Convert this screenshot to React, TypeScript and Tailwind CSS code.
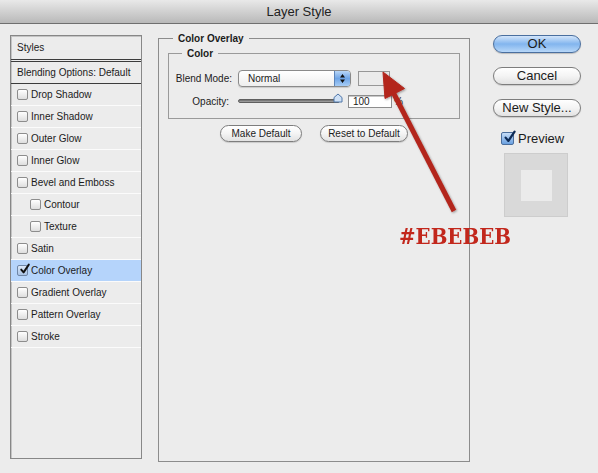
import React from "react";

const effects: { label: string; indent?: boolean; checked?: boolean }[] = [
  { label: "Drop Shadow" },
  { label: "Inner Shadow" },
  { label: "Outer Glow" },
  { label: "Inner Glow" },
  { label: "Bevel and Emboss" },
  { label: "Contour", indent: true },
  { label: "Texture", indent: true },
  { label: "Satin" },
  { label: "Color Overlay", checked: true },
  { label: "Gradient Overlay" },
  { label: "Pattern Overlay" },
  { label: "Stroke" },
];

function Check({ size = 11, blue = false }: { size?: number; blue?: boolean }) {
  return (
    <svg width={size} height={size} viewBox="0 0 11 11" className="absolute left-[1px] -top-[2px] overflow-visible">
      <path
        d="M2.2 5.6 L4.6 8.4 L9.8 0.6"
        fill="none"
        stroke={blue ? "#0d2a55" : "#111"}
        strokeWidth="1.9"
        strokeLinecap="round"
        strokeLinejoin="round"
      />
    </svg>
  );
}

function Checkbox({ checked }: { checked?: boolean }) {
  return (
    <span
      className={
        "relative inline-block w-[11px] h-[11px] rounded-[2px] border shrink-0 " +
        (checked
          ? "border-[#6f86a6] bg-gradient-to-b from-[#dbe8f8] to-[#a9c3e6]"
          : "border-[#8d8d8d] bg-gradient-to-b from-[#ffffff] to-[#dedede]")
      }
    >
      {checked && <Check />}
    </span>
  );
}

function RoundButton({ children, className = "" }: { children: React.ReactNode; className?: string }) {
  return (
    <button
      className={
        "flex items-center justify-center rounded-full border border-[#7d7d7d] bg-gradient-to-b from-[#ffffff] via-[#f4f4f4] to-[#e2e2e2] shadow-[0_1px_1px_rgba(0,0,0,0.15)] " +
        className
      }
    >
      {children}
    </button>
  );
}

export default function App() {
  return (
    <div className="relative w-[598px] h-[473px] overflow-hidden bg-[#ececec] text-[#1b1b1b] font-['Liberation_Sans',Arial,sans-serif]">
      {/* title bar */}
      <div className="h-[24px] flex items-center justify-center border-b border-[#6f6f6f] bg-gradient-to-b from-[#e9e9e9] to-[#b9b9b9] text-[13px] text-[#222]">
        Layer Style
      </div>

      <div className="flex pl-[10px]">
        {/* styles list */}
        <div className="mt-[11px] w-[132px] h-[424px] border border-[#878787] bg-[#ececec] shadow-[inset_1px_1px_0_#c4c4c4] text-[10px]">
          <div className="h-[23px] flex items-center pl-[6px]">Styles</div>
          <div className="h-[3px] border-y border-[#3c3c3c]" />
          <div className="h-[22px] flex items-center pl-[6px] border-b border-[#3c3c3c]">Blending Options: Default</div>
          {effects.map((e) => (
            <div
              key={e.label}
              className={
                "h-[22px] flex items-center border-b border-[#fbfbfb] " +
                (e.indent ? "pl-[19px] " : "pl-[6px] ") +
                (e.checked ? "bg-[#b5d4fb]" : "")
              }
            >
              <Checkbox checked={e.checked} />
              <span className="ml-[3px]">{e.label}</span>
            </div>
          ))}
        </div>

        {/* color overlay */}
        <fieldset className="ml-[16px] mt-[8px] w-[312px] h-[430px] border border-[#8c8c8c] px-[9px]">
          <legend className="ml-[5px] px-[5px] text-[10px] leading-[13px] font-bold">Color Overlay</legend>
          <fieldset className="mt-[2px] border border-[#9a9a9a] pb-[11px]">
            <legend className="ml-[13px] px-[5px] text-[10px] leading-[13px] font-bold">Color</legend>
            <div className="mt-[10px] h-[17px] flex items-center text-[10px]">
              <span className="w-[63px] text-right">Blend Mode:</span>
              <div className="ml-[6px] w-[113px] h-[17px] flex rounded-[4px] border border-[#8a8a8a] bg-gradient-to-b from-[#ffffff] to-[#eeeeee] shadow-[0_1px_1px_rgba(0,0,0,0.15)] overflow-hidden">
                <span className="flex-1 flex items-center pl-[9px]">Normal</span>
                <span className="w-[16px] flex items-center justify-center border-l border-[#5d84b8] bg-gradient-to-b from-[#b9d6f6] via-[#6ea4e6] to-[#a6ccf5]">
                  <svg width="7" height="11" viewBox="0 0 7 11">
                    <path d="M3.5 1 L6 4.5 H1 Z M3.5 10 L6 6.5 H1 Z" fill="#111" />
                  </svg>
                </span>
              </div>
              <div className="ml-[7px] w-[32px] h-[15px] border border-[#979797] bg-[#ebebeb]" />
            </div>
            <div className="mt-[8px] h-[12px] flex items-center text-[10px]">
              <span className="w-[63px] text-right pr-[3px]">Opacity:</span>
              <div className="relative ml-[6px] w-[102px] h-[12px] flex items-center">
                <div className="w-full h-[4px] rounded-full border border-[#5f5f5f] bg-gradient-to-b from-[#6a6a6a] to-[#a8a8a8]" />
                <svg width="10" height="10" viewBox="0 0 10 10" className="absolute -right-[3px] -top-[2px]">
                  <path d="M1 9 V4.5 L5 1 L9 4.5 V9 Z" fill="#cfe1f6" stroke="#4f76a8" strokeWidth="1" />
                </svg>
              </div>
              <div className="ml-[8px] w-[44px] h-[13px] flex items-center pl-[4px] border border-[#8d8d8d] bg-white shadow-[inset_0_1px_0_#c8c8c8]">
                100
              </div>
              <span className="ml-[2px]">%</span>
            </div>
          </fieldset>
          <div className="mt-[6px] flex justify-center gap-[18px] text-[10px]">
            <RoundButton className="w-[82px] h-[17px]">Make Default</RoundButton>
            <RoundButton className="w-[88px] h-[17px]">Reset to Default</RoundButton>
          </div>
        </fieldset>

        {/* buttons */}
        <div className="ml-[23px] mt-[11px] w-[88px] flex flex-col text-[13px]">
          <button className="h-[18px] flex items-center justify-center rounded-full border border-[#4a6f9f] bg-gradient-to-b from-[#d3e5fa] via-[#82b5ee] to-[#b7d7f8] shadow-[0_1px_1px_rgba(0,0,0,0.2)]">
            OK
          </button>
          <RoundButton className="mt-[14px] h-[18px]">Cancel</RoundButton>
          <RoundButton className="mt-[14px] h-[18px]">New Style...</RoundButton>
          <div className="mt-[15px] h-[13px] flex items-center pl-[8px]">
            <span className="relative inline-block w-[13px] h-[13px] rounded-[2px] border border-[#4b6e9c] bg-gradient-to-b from-[#c6ddf7] to-[#6aa0e0]">
              <Check size={13} blue />
            </span>
            <span className="ml-[4px]">Preview</span>
          </div>
          <div className="mt-[8px] ml-[11px] w-[64px] h-[64px] flex items-center justify-center bg-[#d9d9d9] border border-[#cdcdcd]">
            <div className="w-[31px] h-[31px] bg-[#ebebeb]" />
          </div>
        </div>
      </div>

      {/* annotation arrow */}
      <svg width="598" height="473" viewBox="0 0 598 473" className="absolute inset-0 pointer-events-none">
        <defs>
          <filter id="sh" x="-20%" y="-20%" width="140%" height="140%">
            <feDropShadow dx="1" dy="1" stdDeviation="1" floodColor="#000" floodOpacity="0.35" />
          </filter>
        </defs>
        <g filter="url(#sh)" fill="#b3261c" stroke="#b3261c">
          <line x1="454" y1="211" x2="393" y2="92" strokeWidth="5" />
          <path d="M383 72 L404.5 88.5 L385 98.5 Z" strokeWidth="1" strokeLinejoin="round" />
        </g>
      </svg>
      <div className="absolute left-[399px] top-[224px] origin-left scale-x-[0.86] text-[23px] leading-[24px] font-bold text-[#c2271c] font-['DejaVu_Serif',serif]">
        #EBEBEB
      </div>
    </div>
  );
}
